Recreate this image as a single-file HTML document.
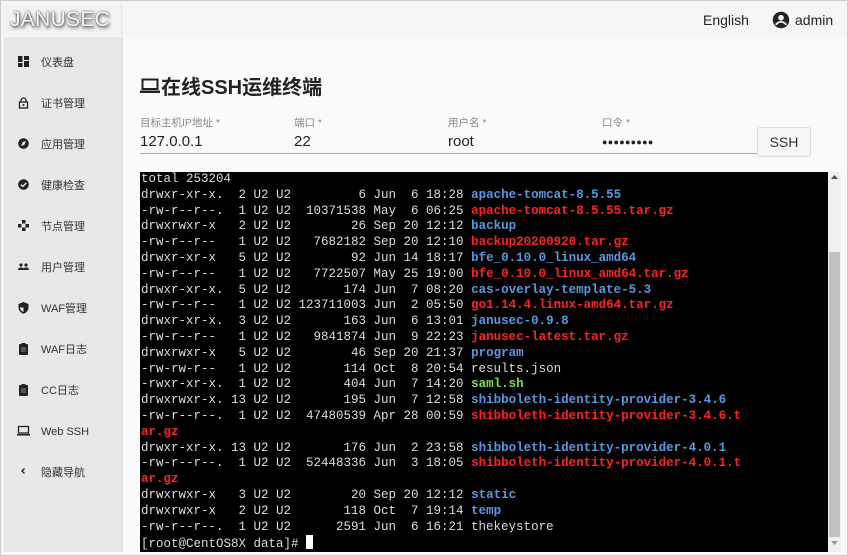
<!DOCTYPE html>
<html><head><meta charset="utf-8"><style>
*{margin:0;padding:0;box-sizing:border-box}
body{width:848px;height:556px;overflow:hidden;background:#fafafa;font-family:"Liberation Sans","Noto Sans CJK SC",sans-serif;position:relative}
.frame{position:absolute;left:0;top:0;width:848px;height:556px;border:1px solid #ccc;z-index:9;pointer-events:none}
.hdr{position:absolute;left:0;top:0;width:848px;height:37px;background:#f5f5f5}
.logo{position:absolute;left:4px;top:4px;width:118px;height:31px;background:#f2f2f2;border-right:1px solid #e4e4e4;font-size:21px;color:#f4f4f4;text-shadow:0 0 2px #444,1px 2px 3px #555;padding-left:6px;line-height:31px;letter-spacing:0.3px}
.side{position:absolute;left:4px;top:37px;width:119px;height:515px;background:#e8e8e8;border-right:1px solid #dcdcdc}
.item{position:absolute;left:14px;font-size:11px;color:#333;height:16px;line-height:16px;margin-top:1px}
.item i{position:absolute;left:0;top:1px;width:11px;height:11px;display:block}
.item span{position:absolute;left:23px;white-space:nowrap}
.top{position:absolute;font-size:14px;color:#222;top:12px}
h1{position:absolute;left:140px;top:71px;font-size:20px;font-weight:bold;color:#222;white-space:nowrap}
.lbl{position:absolute;top:115px;font-size:10.5px;color:#888}
.val{position:absolute;top:133px;font-size:15px;color:#222}
.line{position:absolute;left:140px;top:153px;width:617px;height:1px;background:#aaa}
.btn{position:absolute;left:757px;top:127px;width:54px;height:30px;border:1px solid #ddd;border-radius:3px;background:#f7f7f7;font-size:14px;color:#333;text-align:center;line-height:28px}
.term{position:absolute;left:140px;top:172px;width:688px;height:380px;background:#000;overflow:hidden}
pre{font-family:"Liberation Mono",monospace;font-size:12.5px;line-height:15.8px;color:#ddd;padding:0 0 0 1px;margin-top:0}
.b{color:#5b97e0;font-weight:bold}.r{color:#f22;font-weight:bold}.g{color:#7fe03a;font-weight:bold}
.cur{display:inline-block;width:7px;height:14px;background:#fff;vertical-align:-2px}
.sb{position:absolute;left:828px;top:172px;width:13px;height:380px;background:#f0f0f0}
.thumb{position:absolute;left:829px;top:252px;width:11px;height:285px;background:#c1c1c1}
</style></head><body>
<div class="hdr"></div>
<div class="logo">JANUSEC</div>
<div class="top" style="left:703px">English</div>
<svg style="position:absolute;left:772px;top:11px" width="18" height="18" viewBox="0 0 24 24"><circle cx="12" cy="12" r="11" fill="#222"/><circle cx="12" cy="9" r="3.8" fill="#f5f5f5"/><path d="M5 18.5c2-3 4.5-4 7-4s5 1 7 4" stroke="#f5f5f5" stroke-width="2.4" fill="none"/></svg>
<div class="top" style="left:795px">admin</div>
<div class="side">
<div class="item" style="top:17px"><i><svg width="11" height="11"><rect x="0" y="0" width="4.5" height="6" fill="#222"/><rect x="6" y="0" width="5" height="4" fill="#222"/><rect x="0" y="7" width="4.5" height="4" fill="#222"/><rect x="6" y="5" width="5" height="6" fill="#222"/></svg></i><span>仪表盘</span></div>
<div class="item" style="top:58px"><i><svg width="11" height="12"><path d="M3 5V3.5a2.5 2.5 0 015 0V5" stroke="#222" fill="none" stroke-width="1.3"/><rect x="1.5" y="5" width="8" height="6" fill="none" stroke="#222" stroke-width="1.3"/><circle cx="5.5" cy="8" r="1" fill="#222"/></svg></i><span>证书管理</span></div>
<div class="item" style="top:99px"><i><svg width="11" height="11"><circle cx="5.5" cy="5.5" r="5.3" fill="#222"/><path d="M3 8l1.7-4 3.3-1-1.7 4z" fill="#e8e8e8"/></svg></i><span>应用管理</span></div>
<div class="item" style="top:140px"><i><svg width="11" height="11"><circle cx="5.5" cy="5.5" r="5.3" fill="#222"/><path d="M2.8 5.6l1.9 1.9 3.6-3.6" stroke="#e8e8e8" stroke-width="1.4" fill="none"/></svg></i><span>健康检查</span></div>
<div class="item" style="top:181px"><i><svg width="11" height="11"><rect x="4" y="0" width="3.5" height="3.5" fill="#222"/><rect x="0" y="4" width="3.5" height="3.5" fill="#222"/><rect x="7.5" y="4" width="3.5" height="3.5" fill="#222"/><rect x="4" y="7.5" width="3.5" height="3.5" fill="#222"/></svg></i><span>节点管理</span></div>
<div class="item" style="top:222px"><i><svg width="11" height="11"><circle cx="3" cy="4" r="1.6" fill="#222"/><circle cx="8" cy="4" r="1.6" fill="#222"/><path d="M0 9c0-2 1.5-2.5 3-2.5S6 7 6 9zM5 9c0-2 1.5-2.5 3-2.5S11 7 11 9z" fill="#222"/></svg></i><span>用户管理</span></div>
<div class="item" style="top:263px"><i><svg width="11" height="12"><path d="M5.5 0L10.5 2v3.5c0 3-2.3 5.3-5 6.3-2.7-1-5-3.3-5-6.3V2z" fill="#222"/><path d="M5.5 1.5v8.5C3.5 9.2 2 7.5 2 5.5h3.5z" fill="#e8e8e8"/></svg></i><span>WAF管理</span></div>
<div class="item" style="top:304px"><i><svg width="11" height="12"><rect x="1" y="1" width="9" height="11" rx="1" fill="#222"/><rect x="3.5" y="0" width="4" height="2" fill="#222"/><rect x="3" y="4" width="5" height="5" fill="#555"/></svg></i><span>WAF日志</span></div>
<div class="item" style="top:345px"><i><svg width="11" height="12"><rect x="1" y="1" width="9" height="11" rx="1" fill="#222"/><rect x="3.5" y="0" width="4" height="2" fill="#222"/><rect x="3" y="4" width="5" height="5" fill="#555"/></svg></i><span>CC日志</span></div>
<div class="item" style="top:386px"><i style="left:-1px;width:13px"><svg width="13" height="11"><rect x="1.5" y="1.5" width="10" height="6.5" fill="none" stroke="#222" stroke-width="1.3"/><rect x="0" y="9" width="13" height="1.5" fill="#222"/></svg></i><span>Web SSH</span></div>
<div class="item" style="top:427px"><i><svg width="11" height="11"><path d="M6.5 2.5L4 5l2.5 2.5" stroke="#222" stroke-width="1.3" fill="none"/></svg></i><span>隐藏导航</span></div>
</div>
<h1><svg width="20" height="18" viewBox="0 0 20 18" style="vertical-align:-1px;margin-right:1px"><rect x="2.5" y="2.5" width="15" height="9.5" fill="none" stroke="#222" stroke-width="2"/><rect x="0" y="13.5" width="20" height="2.5" fill="#222"/></svg>在线SSH运维终端</h1>
<div class="lbl" style="left:140px">目标主机IP地址 *</div>
<div class="lbl" style="left:294px">端口 *</div>
<div class="lbl" style="left:448px">用户名 *</div>
<div class="lbl" style="left:602px">口令 *</div>
<div class="val" style="left:140px">127.0.0.1</div>
<div class="val" style="left:294px">22</div>
<div class="val" style="left:448px">root</div>
<div class="val" style="left:602px;font-size:9px;top:137px;letter-spacing:0.3px">●●●●●●●●●</div>
<div class="line"></div>
<div class="btn">SSH</div>
<div class="term"><pre>total 253204
drwxr-xr-x.  2 U2 U2         6 Jun  6 18:28 <span class="b">apache-tomcat-8.5.55</span>
-rw-r--r--.  1 U2 U2  10371538 May  6 06:25 <span class="r">apache-tomcat-8.5.55.tar.gz</span>
drwxrwxr-x   2 U2 U2        26 Sep 20 12:12 <span class="b">backup</span>
-rw-r--r--   1 U2 U2   7682182 Sep 20 12:10 <span class="r">backup20200920.tar.gz</span>
drwxr-xr-x   5 U2 U2        92 Jun 14 18:17 <span class="b">bfe_0.10.0_linux_amd64</span>
-rw-r--r--   1 U2 U2   7722507 May 25 19:00 <span class="r">bfe_0.10.0_linux_amd64.tar.gz</span>
drwxr-xr-x.  5 U2 U2       174 Jun  7 08:20 <span class="b">cas-overlay-template-5.3</span>
-rw-r--r--   1 U2 U2 123711003 Jun  2 05:50 <span class="r">go1.14.4.linux-amd64.tar.gz</span>
drwxr-xr-x.  3 U2 U2       163 Jun  6 13:01 <span class="b">janusec-0.9.8</span>
-rw-r--r--   1 U2 U2   9841874 Jun  9 22:23 <span class="r">janusec-latest.tar.gz</span>
drwxrwxr-x   5 U2 U2        46 Sep 20 21:37 <span class="b">program</span>
-rw-rw-r--   1 U2 U2       114 Oct  8 20:54 results.json
-rwxr-xr-x.  1 U2 U2       404 Jun  7 14:20 <span class="g">saml.sh</span>
drwxrwxr-x. 13 U2 U2       195 Jun  7 12:58 <span class="b">shibboleth-identity-provider-3.4.6</span>
-rw-r--r--.  1 U2 U2  47480539 Apr 28 00:59 <span class="r">shibboleth-identity-provider-3.4.6.t
ar.gz</span>
drwxr-xr-x. 13 U2 U2       176 Jun  2 23:58 <span class="b">shibboleth-identity-provider-4.0.1</span>
-rw-r--r--.  1 U2 U2  52448336 Jun  3 18:05 <span class="r">shibboleth-identity-provider-4.0.1.t
ar.gz</span>
drwxrwxr-x   3 U2 U2        20 Sep 20 12:12 <span class="b">static</span>
drwxrwxr-x   2 U2 U2       118 Oct  7 19:14 <span class="b">temp</span>
-rw-r--r--.  1 U2 U2      2591 Jun  6 16:21 thekeystore
[root@CentOS8X data]# <span class="cur"></span></pre></div>
<div class="sb"></div><div class="thumb"></div>
<svg style="position:absolute;left:831px;top:175px" width="7" height="5"><path d="M0 4h7L3.5 0z" fill="#555"/></svg>
<svg style="position:absolute;left:831px;top:541px" width="7" height="5"><path d="M0 0h7L3.5 4z" fill="#999"/></svg>
<div class="frame"></div>
</body></html>
